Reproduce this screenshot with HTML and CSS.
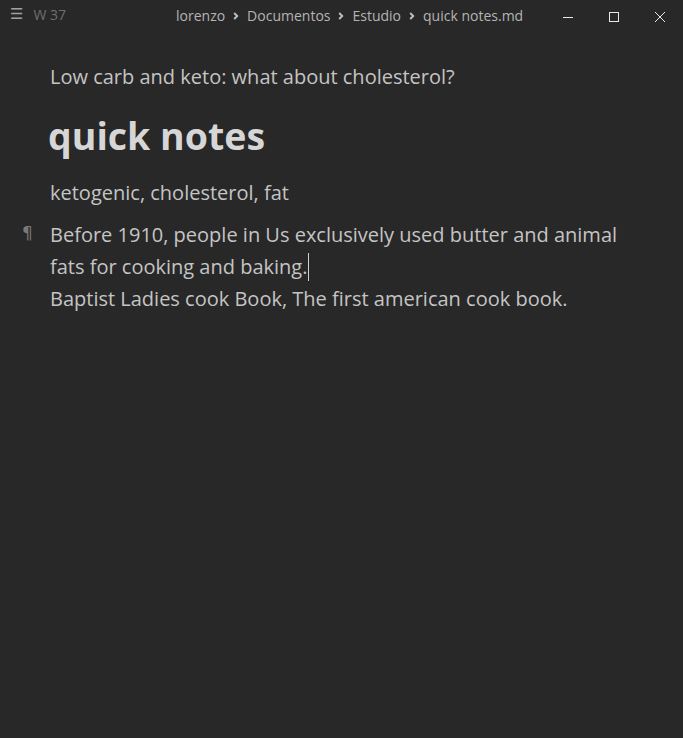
FILE: index.html
```html
<!DOCTYPE html>
<html>
<head>
<meta charset="utf-8">
<link rel="stylesheet" href="styles.css">
</head>
<body>
<div class="app">
  <header class="topbar">
    <div class="left">
      <span class="menu">☰</span>
      <span class="count">W 37</span>
    </div>
    <nav class="crumbs">
      <span>lorenzo</span>
      <svg class="chev" width="6" height="8" viewBox="0 0 6 8"><path d="M1.2 1 L4.2 4 L1.2 7" fill="none" stroke="#c0c0c0" stroke-width="1.9"/></svg>
      <span>Documentos</span>
      <svg class="chev" width="6" height="8" viewBox="0 0 6 8"><path d="M1.2 1 L4.2 4 L1.2 7" fill="none" stroke="#c0c0c0" stroke-width="1.9"/></svg>
      <span>Estudio</span>
      <svg class="chev" width="6" height="8" viewBox="0 0 6 8"><path d="M1.2 1 L4.2 4 L1.2 7" fill="none" stroke="#c0c0c0" stroke-width="1.9"/></svg>
      <span>quick notes.md</span>
    </nav>
    <div class="controls">
      <svg width="12" height="12" viewBox="0 0 12 12"><path d="M1 6.5 H11" stroke="#e8e8e8" stroke-width="1"/></svg>
      <svg width="12" height="12" viewBox="0 0 12 12"><rect x="1.5" y="1.5" width="9" height="9" fill="none" stroke="#e8e8e8" stroke-width="1"/></svg>
      <svg width="12" height="12" viewBox="0 0 12 12"><path d="M1 1 L11 11 M11 1 L1 11" stroke="#e8e8e8" stroke-width="1"/></svg>
    </div>
  </header>
  <main class="doc">
    <p class="title">Low carb and keto: what about cholesterol?</p>
    <h1 class="heading">quick notes</h1>
    <p class="tags">ketogenic, cholesterol, fat</p>
    <div class="para">
      <span class="pilcrow">¶</span>
      <p>Before 1910, people in Us exclusively used butter and animal fats for cooking and baking.<span class="caret"></span><br>Baptist Ladies cook Book, The first american cook book.</p>
    </div>
  </main>
</div>
</body>
</html>
```

FILE: styles.css
```css
html, body {
  margin: 0;
  padding: 0;
  background: #282828;
}
body {
  font-family: "Open Sans", "Noto Sans", sans-serif;
  color: #c8c8c8;
  width: 683px;
  height: 738px;
  overflow: hidden;
}
.topbar {
  height: 32px;
  display: flex;
  align-items: center;
  position: relative;
}
.left {
  display: flex;
  align-items: center;
  padding-left: 10px;
  gap: 10px;
  width: 160px;
}
.menu {
  font-size: 15px;
  color: #a0a0a0;
  font-family: "DejaVu Sans", sans-serif;
  line-height: 1;
  margin-top: -3px;
}
.count {
  font-size: 14px;
  color: #6e6e6e;
  margin-top: -4px;
}
.crumbs {
  display: flex;
  align-items: center;
  gap: 8px;
  font-size: 14px;
  color: #b4b4b4;
  margin-left: 6px;
  margin-top: -2px;
}
.chev { margin-top: 1px; }
.controls {
  display: flex;
  align-items: center;
  margin-left: auto;
  gap: 34px;
  padding-right: 17px;
  margin-top: 1px;
}
.controls svg { display: block; }
.doc {
  padding-left: 50px;
  padding-right: 40px;
  padding-top: 29px;
}
.title {
  margin: 0;
  font-size: 20px;
  line-height: 32px;
  color: #c4c4c4;
}
.heading {
  margin: 18px 0 0 -2px;
  font-size: 37.5px;
  font-weight: 700;
  line-height: 50px;
  color: #d6d6d6;
}
.tags {
  margin: 16px 0 0 0;
  font-size: 20px;
  line-height: 32px;
  color: #c4c4c4;
}
.para {
  position: relative;
  margin-top: 10px;
}
.para p {
  margin: 0;
  font-size: 20px;
  line-height: 32px;
  color: #c4c4c4;
}
.pilcrow {
  position: absolute;
  left: -28px;
  top: 6px;
  font-size: 17px;
  color: #7a7a7a;
  line-height: 1;
  font-family: "DejaVu Sans", sans-serif;
}
.caret {
  display: inline-block;
  width: 1px;
  height: 28px;
  background: #d0d0d0;
  vertical-align: -7px;
  margin-left: 1px;
}
```
